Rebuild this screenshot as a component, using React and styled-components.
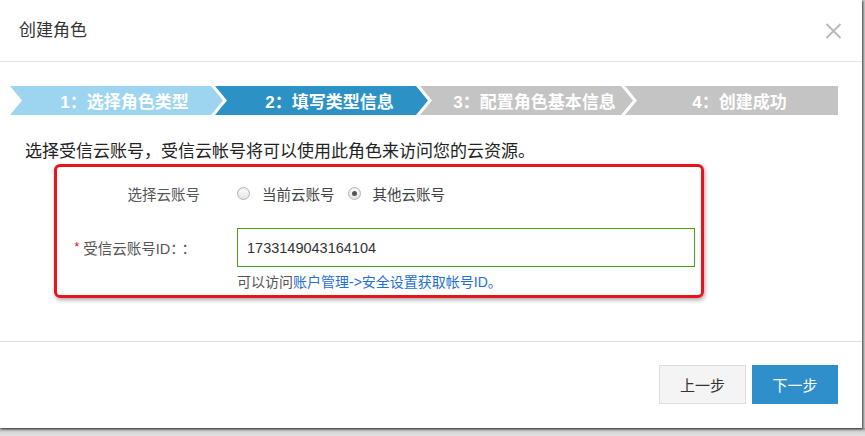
import React from "react"
import styled, { createGlobalStyle } from "styled-components"

const GlobalStyle = createGlobalStyle`
    html, body {
        margin: 0;
        padding: 0;
        width: 865px;
        height: 436px;
        overflow: hidden;
        background: #c8c8c8;
        font-family: "Liberation Sans", "Noto Sans CJK SC", sans-serif;
    }
`

const steps = [
    { label: "1：选择角色类型", color: "#9dd5f1" },
    { label: "2：填写类型信息", color: "#2c91c5" },
    { label: "3：配置角色基本信息", color: "#c4c4c4" },
    { label: "4：创建成功", color: "#c4c4c4" },
]

export default function App() {
    return (
        <Page>
            <GlobalStyle />
            <Modal>
                <Header>
                    <h1>创建角色</h1>
                    <Close aria-label="close">
                        <svg width="17" height="16" viewBox="0 0 17 16">
                            <path d="M1.5 1L15.5 15M15.5 1L1.5 15" stroke="#b8b8b8" strokeWidth="1.8" fill="none" />
                        </svg>
                    </Close>
                </Header>
                <Body>
                    <StepBar>
                        {steps.map((s, i) => (
                            <Step key={i} $color={s.color} $last={i === steps.length - 1}>
                                {s.label}
                            </Step>
                        ))}
                    </StepBar>
                    <Description>选择受信云账号，受信云帐号将可以使用此角色来访问您的云资源。</Description>
                    <FormBox>
                        <Label>选择云账号</Label>
                        <RadioGroup>
                            <RadioItem>
                                <Radio />
                                当前云账号
                            </RadioItem>
                            <RadioItem>
                                <Radio $checked />
                                其他云账号
                            </RadioItem>
                        </RadioGroup>
                        <Label $tall>
                            <Required>*</Required>受信云账号ID<Colons>：：</Colons>
                        </Label>
                        <div>
                            <Input>1733149043164104</Input>
                            <Hint>
                                可以访问<a>账户管理-&gt;安全设置获取帐号ID。</a>
                            </Hint>
                        </div>
                    </FormBox>
                </Body>
                <Footer>
                    <Button>上一步</Button>
                    <Button $primary>下一步</Button>
                </Footer>
            </Modal>
            <Backdrop />
        </Page>
    )
}

const Page = styled.div`
    display: flex;
    flex-direction: column;
    width: 865px;
    height: 436px;
`

const Modal = styled.div`
    display: flex;
    flex-direction: column;
    width: 862px;
    height: 428px;
    flex-shrink: 0;
    box-sizing: border-box;
    background: #FFFFFF;
    box-shadow: 1px 1px 2px rgba(0, 0, 0, 0.7);
    position: relative;
    z-index: 1;
`

const Header = styled.header`
    display: flex;
    height: 62px;
    align-items: center;
    justify-content: space-between;
    box-sizing: border-box;
    padding: 0 20px 0 19px;
    border-bottom: 1px solid #e6e6e6;

    h1 {
        margin: 0;
        font-weight: 400;
        font-size: 17px;
        line-height: 24px;
        color: #333333;
    }
`

const Close = styled.div`
    display: flex;
    width: 17px;
    height: 16px;
`

const Body = styled.div`
    flex: 1;
    box-sizing: border-box;
    padding: 24px 24px 0 10px;
`

const StepBar = styled.div`
    display: flex;
    height: 29px;
`

const Step = styled.div`
    flex: 1;
    display: flex;
    align-items: center;
    justify-content: center;
    box-sizing: border-box;
    padding-left: 16px;
    background: ${p => p.$color};
    color: #FFFFFF;
    font-size: 17px;
    font-weight: 700;
    white-space: nowrap;
    clip-path: ${p => p.$last
        ? "polygon(0 0, 100% 0, 100% 100%, 0 100%, 12px 50%)"
        : "polygon(0 0, calc(100% - 12px) 0, 100% 50%, calc(100% - 12px) 100%, 0 100%, 12px 50%)"};

    & + & {
        margin-left: -8px;
    }
`

const Description = styled.p`
    margin: 25px 0 0 15px;
    font-size: 17px;
    line-height: 24px;
    color: #222222;
`

const FormBox = styled.div`
    display: grid;
    grid-template-columns: 143px 1fr;
    column-gap: 37px;
    row-gap: 20px;
    width: 650px;
    margin-left: 44px;
    box-sizing: border-box;
    padding: 11px 6px 3px 0;
    border: 3px solid #e8141c;
    border-radius: 6px;
    box-shadow: 1px 2px 4px rgba(0, 0, 0, 0.35);
`

const Label = styled.div`
    display: flex;
    align-items: center;
    justify-content: flex-end;
    height: ${p => (p.$tall ? "39px" : "30px")};
    font-size: 14.5px;
    color: #555555;
    white-space: nowrap;
`

const Colons = styled.span`
    letter-spacing: 4px;
`

const Required = styled.span`
    color: #e60012;
    font-size: 12px;
    margin-right: 4px;
    align-self: flex-start;
    margin-top: 12px;
`

const RadioGroup = styled.div`
    display: flex;
    align-items: center;
    gap: 13px;
    height: 30px;
`

const RadioItem = styled.label`
    display: flex;
    align-items: center;
    gap: 12px;
    font-size: 14.5px;
    color: #444444;
`

const Radio = styled.span`
    display: flex;
    align-items: center;
    justify-content: center;
    width: 13px;
    height: 13px;
    box-sizing: border-box;
    border: 1px solid #b3b3b3;
    border-radius: 50%;
    background: linear-gradient(#ffffff, #e2e2e2);
    box-shadow: inset 0 1px 1px rgba(0, 0, 0, 0.08);

    &::after {
        content: "";
        display: ${p => (p.$checked ? "block" : "none")};
        width: 5px;
        height: 5px;
        border-radius: 50%;
        background: #555555;
    }
`

const Input = styled.div`
    display: flex;
    align-items: center;
    height: 39px;
    box-sizing: border-box;
    padding-left: 9px;
    border: 1px solid #46a01a;
    font-size: 14.5px;
    color: #333333;
`

const Hint = styled.div`
    margin-top: 5px;
    font-size: 14px;
    line-height: 20px;
    color: #555555;

    a {
        color: #2470d2;
    }
`

const Footer = styled.footer`
    display: flex;
    height: 87px;
    justify-content: flex-end;
    align-items: flex-start;
    gap: 6px;
    box-sizing: border-box;
    padding: 23px 24px 0 0;
    border-top: 1px solid #dddddd;
`

const Button = styled.button`
    width: ${p => (p.$primary ? "86px" : "87px")};
    height: 39px;
    box-sizing: border-box;
    border: 1px solid ${p => (p.$primary ? "#2e8fcb" : "#dcdcdc")};
    background: ${p => (p.$primary ? "#2e8fcb" : "#f4f4f4")};
    color: ${p => (p.$primary ? "#FFFFFF" : "#333333")};
    font-family: "Liberation Sans", "Noto Sans CJK SC", sans-serif;
    font-size: 15px;
    padding: 0;
`

const Backdrop = styled.div`
    flex: 1;
    background: linear-gradient(#9a9a9a, #d6d6d6 4px, #e4e4e4);
`
